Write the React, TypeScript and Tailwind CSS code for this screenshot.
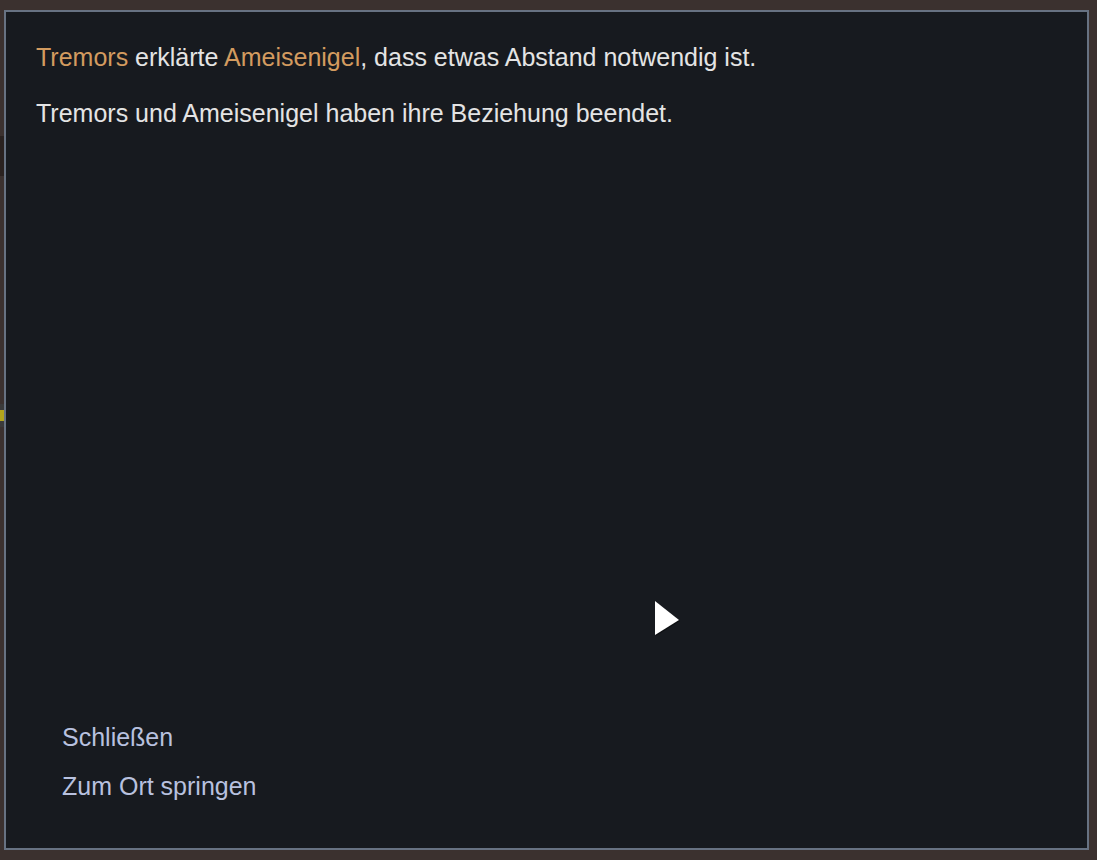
import React from "react";

export default function App() {
  return (
    <div
      className="relative w-[1097px] h-[860px] overflow-hidden bg-[#3b312f] pt-[10px] pl-[4px]"
      style={{ fontFamily: '"Liberation Sans", Arial, sans-serif' }}
    >
      <div className="absolute left-0 top-[136px] w-[4px] h-[40px] bg-[#2a2220]" />
      <div className="absolute left-0 top-[404px] w-[4px] h-[8px] bg-[#3a3a3a]" />
      <div className="absolute left-0 top-[410px] w-[4px] h-[11px] bg-[#b3a51c]" />
      <div className="absolute left-0 top-[421px] w-[4px] h-[6px] bg-[#3a3a3a]" />
      <div className="w-[1085px] h-[840px] border-2 border-[#677282] bg-[#171a1f] flex flex-col justify-between pl-[30px] pt-[30px] pb-[47px]">
        <div className="flex flex-col gap-[26px] text-[25px] leading-[30px] text-[#e4e4e4]">
          <p>
            <span className="text-[#d39b5f]">Tremors</span> erklärte{" "}
            <span className="text-[#d39b5f]">Ameisenigel</span>, dass etwas Abstand notwendig ist.
          </p>
          <p>Tremors und Ameisenigel haben ihre Beziehung beendet.</p>
        </div>
        <div className="flex flex-col gap-[19px] pl-[26px] text-[25px] leading-[30px] text-[#b8c1df]">
          <span>Schließen</span>
          <span>Zum Ort springen</span>
        </div>
      </div>
      <svg className="absolute left-[652px] top-[598px]" width="32" height="42" viewBox="0 0 32 42">
        <polygon points="3,3 3,37 27,22" fill="#000" opacity="0.4" transform="translate(1,1)" />
        <polygon points="3,3 3,37 27,22" fill="#ffffff" />
      </svg>
    </div>
  );
}
